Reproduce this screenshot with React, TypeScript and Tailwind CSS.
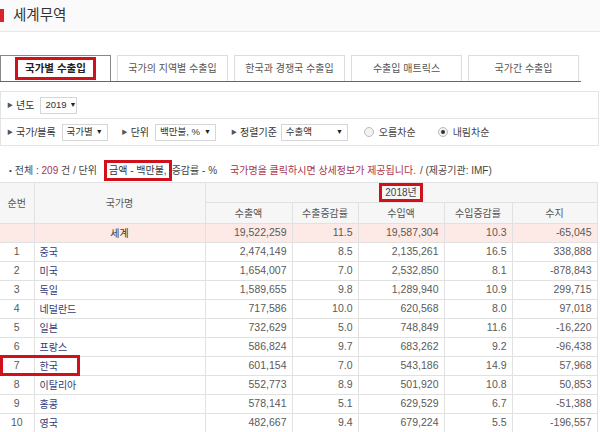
import React from 'react';

const rows = [
  ['1', '중국', '2,474,149', '8.5', '2,135,261', '16.5', '338,888'],
  ['2', '미국', '1,654,007', '7.0', '2,532,850', '8.1', '-878,843'],
  ['3', '독일', '1,589,655', '9.8', '1,289,940', '10.9', '299,715'],
  ['4', '네덜란드', '717,586', '10.0', '620,568', '8.0', '97,018'],
  ['5', '일본', '732,629', '5.0', '748,849', '11.6', '-16,220'],
  ['6', '프랑스', '586,824', '9.7', '683,262', '9.2', '-96,438'],
  ['7', '한국', '601,154', '7.0', '543,186', '14.9', '57,968'],
  ['8', '이탈리아', '552,773', '8.9', '501,920', '10.8', '50,853'],
  ['9', '홍콩', '578,141', '5.1', '629,529', '6.7', '-51,388'],
  ['10', '영국', '482,667', '9.4', '679,224', '5.5', '-196,557'],
];

const tabs = ['국가의 지역별 수출입', '한국과 경쟁국 수출입', '수출입 매트릭스', '국가간 수출입'];

function Select({ value, width }: { value: string; width: string }) {
  return (
    <div className={`flex h-[17px] items-center justify-between gap-[3px] whitespace-nowrap border border-[#d6d6d6] bg-white px-[4px] text-[9.5px] text-[#333] ${width}`}>
      <span>{value}</span>
      <span className="text-[7px] text-[#222]">▼</span>
    </div>
  );
}

function Label({ text }: { text: string }) {
  return (
    <div className="flex items-center gap-[3px] whitespace-nowrap text-[10px] text-[#333]">
      <span className="text-[6px] text-[#555]">▶</span>
      <span>{text}</span>
    </div>
  );
}

function Radio({ checked, label }: { checked?: boolean; label: string }) {
  return (
    <div className="flex items-center gap-[5px] whitespace-nowrap text-[10px] text-[#444]">
      <span className="flex h-[10px] w-[10px] items-center justify-center rounded-full border border-[#bbb] bg-[#f2f2f2]">
        {checked && <span className="h-[4px] w-[4px] rounded-full bg-[#333]" />}
      </span>
      <span>{label}</span>
    </div>
  );
}

export default function App() {
  const cell = 'border border-[#e1e1e1] px-[5px] h-[19px] text-[10.5px] text-[#5a5a5a]';
  return (
    <div className="h-[432px] w-[600px] overflow-hidden bg-white font-['Liberation_Sans','Noto_Sans_CJK_KR',sans-serif]">
      {/* title */}
      <div className="flex h-[32px] items-center border-b border-[#e8e8e8] bg-[#fafafa]">
        <div className="h-[13px] w-[4px] bg-[#d9232e]" />
        <h1 className="ml-[9px] text-[14.5px] text-[#333]">세계무역</h1>
      </div>

      {/* tabs */}
      <div className="mt-[23px] flex h-[27px] w-[581px] gap-[6px] border-b border-[#666]">
        <div className="flex w-[111px] items-center justify-center border border-b-0 border-[#888] bg-white">
          <span className="border-[3px] border-[#d0101b] px-[7px] py-[1px] text-[10.5px] font-bold text-[#222]">국가별 수출입</span>
        </div>
        {tabs.map((t) => (
          <div key={t} className="flex w-[111px] items-center justify-center border border-b-0 border-[#ddd] text-[10px] text-[#555]">
            {t}
          </div>
        ))}
      </div>

      {/* filters */}
      <div className="mt-[9px] w-[599px] border border-[#e4e4e4]">
        <div className="flex h-[27px] items-center gap-[6px] border-b border-[#e4e4e4] px-[6px]">
          <Label text="년도" />
          <Select value="2019" width="w-[37px]" />
        </div>
        <div className="flex h-[26px] items-center px-[6px]">
          <Label text="국가/블록" />
          <div className="ml-[6px]"><Select value="국가별" width="w-[46px]" /></div>
          <div className="ml-[14px]"><Label text="단위" /></div>
          <div className="ml-[6px]"><Select value="백만불, %" width="w-[61px]" /></div>
          <div className="ml-[15px]"><Label text="정렬기준" /></div>
          <div className="ml-[4px]"><Select value="수출액" width="w-[67px]" /></div>
          <div className="ml-[16px]"><Radio label="오름차순" /></div>
          <div className="ml-[22px]"><Radio checked label="내림차순" /></div>
        </div>
      </div>

      {/* info line */}
      <div className="mt-[13px] flex h-[23px] items-center whitespace-nowrap pl-[9px] text-[10px] text-[#444]">
        <span className="mr-[3px] text-[8px]">•</span>
        <span>전체 : <span className="text-[#a8344e]">209</span> 건 / 단위</span>
        <span className="ml-[7px] border-[3px] border-[#d0101b] px-[2px] leading-[15px] text-[#333]">금액 - 백만불,</span>
        <span>증감률 - %</span>
        <span className="ml-[13px] text-[#a8344e]">국가명을 클릭하시면 상세정보가 제공됩니다.</span>
        <span className="ml-[4px]">/ (제공기관: IMF)</span>
      </div>

      {/* table */}
      <div className="relative w-[597px]">
        <table className="w-[597px] table-fixed border-collapse">
          <colgroup>
            <col className="w-[34px]" />
            <col className="w-[171px]" />
            <col className="w-[87px]" />
            <col className="w-[66px]" />
            <col className="w-[86px]" />
            <col className="w-[68px]" />
            <col className="w-[85px]" />
          </colgroup>
          <thead>
            <tr className="bg-[#f6f6f6] text-[10px] font-normal text-[#555]">
              <th rowSpan={2} className="border border-l-0 border-[#e1e1e1] font-normal">순번</th>
              <th rowSpan={2} className="border border-[#e1e1e1] font-normal">국가명</th>
              <th colSpan={5} className="h-[20px] border border-[#e1e1e1] p-0 font-normal">
                <span className="inline-block border-[3px] border-[#d0101b] px-[3px] leading-[13px] text-[#444]">2018년</span>
              </th>
            </tr>
            <tr className="bg-[#f6f6f6] text-[10px] text-[#555]">
              {['수출액', '수출증감률', '수입액', '수입증감률', '수지'].map((h) => (
                <th key={h} className="h-[21px] border border-[#e1e1e1] font-normal">{h}</th>
              ))}
            </tr>
          </thead>
          <tbody>
            <tr className="bg-[#fde9e5]">
              <td className={`${cell} border-l-0`} />
              <td className={`${cell} text-center text-[10px] text-[#333]`}>세계</td>
              <td className={`${cell} text-right`}>19,522,259</td>
              <td className={`${cell} text-right`}>11.5</td>
              <td className={`${cell} text-right`}>19,587,304</td>
              <td className={`${cell} text-right`}>10.3</td>
              <td className={`${cell} text-right`}>-65,045</td>
            </tr>
            {rows.map((r) => (
              <tr key={r[0]}>
                <td className={`${cell} border-l-0 text-center`}>{r[0]}</td>
                <td className={`${cell} text-[10px] text-[#343a78]`}>{r[1]}</td>
                {r.slice(2).map((v, i) => (
                  <td key={i} className={`${cell} text-right`}>{v}</td>
                ))}
              </tr>
            ))}
          </tbody>
        </table>
        {/* highlight box on Korea row */}
        <div className="pointer-events-none absolute left-0 top-[173px] h-[21px] w-[80px] border-[3px] border-[#d0101b]" />
      </div>
    </div>
  );
}
